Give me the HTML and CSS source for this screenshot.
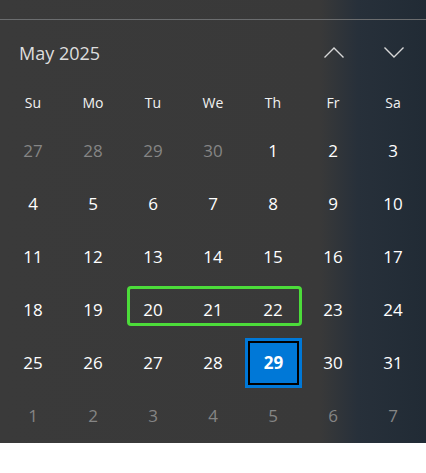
FILE: index.html
```html
<!DOCTYPE html>
<html lang="en">
<head>
  <meta charset="UTF-8">
  <meta name="viewport" content="width=device-width, initial-scale=1.0">
  <title>Calendar</title>
  <link rel="stylesheet" href="styles.css">
</head>
<body>

  <!-- Calendar flyout -->
  <div class="flyout">
    <div class="top-strip"></div>

    <!-- Month header -->
    <div class="month-head">
      <span class="month-title">May 2025</span>
      <div class="nav">
        <button class="nav-btn" aria-label="Previous month">
          <svg width="20" height="11" viewBox="0 0 20 11"><polyline points="0.5,10.5 10,1 19.5,10.5" /></svg>
        </button>
        <button class="nav-btn" aria-label="Next month">
          <svg width="20" height="11" viewBox="0 0 20 11"><polyline points="0.5,0.5 10,10 19.5,0.5" /></svg>
        </button>
      </div>
    </div>

    <!-- Weekday names -->
    <div class="weekdays">
      <span>Su</span><span>Mo</span><span>Tu</span><span>We</span><span>Th</span><span>Fr</span><span>Sa</span>
    </div>

    <!-- Days -->
    <div class="days">
      <span class="day other">27</span><span class="day other">28</span><span class="day other">29</span><span class="day other">30</span><span class="day">1</span><span class="day">2</span><span class="day">3</span>
      <span class="day">4</span><span class="day">5</span><span class="day">6</span><span class="day">7</span><span class="day">8</span><span class="day">9</span><span class="day">10</span>
      <span class="day">11</span><span class="day">12</span><span class="day">13</span><span class="day">14</span><span class="day">15</span><span class="day">16</span><span class="day">17</span>
      <span class="day">18</span><span class="day">19</span><span class="day">20</span><span class="day">21</span><span class="day">22</span><span class="day">23</span><span class="day">24</span>
      <span class="day">25</span><span class="day">26</span><span class="day">27</span><span class="day">28</span><span class="day today"><span class="today-box">29</span></span><span class="day">30</span><span class="day">31</span>
      <span class="day other">1</span><span class="day other">2</span><span class="day other">3</span><span class="day other">4</span><span class="day other">5</span><span class="day other">6</span><span class="day other">7</span>

      <!-- highlighted range 20-22 -->
      <div class="range-mark"></div>
    </div>
  </div>

</body>
</html>
```

FILE: styles.css
```css
* {
  box-sizing: border-box;
  margin: 0;
  padding: 0;
}

body {
  font-family: "Open Sans", "Noto Sans", Arial, sans-serif;
  background-color: #fff;
  color: #fff;
}

.flyout {
  width: 426px;
  height: 443px;
  background: linear-gradient(to right, #3a3a3a 0, #393939 320px, #27303a 358px, #212b35 100%);
  overflow: hidden;
}

.top-strip {
  height: 20px;
  border-bottom: 1px solid #6b6d6f;
}

/* Month header */
.month-head {
  height: 66px;
  display: flex;
  align-items: center;
  justify-content: space-between;
  padding-left: 19px;
  padding-right: 2px;
}

.month-title {
  font-size: 18px;
  color: #dedede;
  margin-top: 0px;
}

.nav {
  display: flex;
  margin-top: -1px;
}

.nav-btn {
  width: 60px;
  height: 40px;
  background: none;
  border: none;
  display: flex;
  align-items: center;
  justify-content: center;
}

.nav-btn polyline {
  fill: none;
  stroke: #d8d8d8;
  stroke-width: 1.4;
}

/* Weekday names */
.weekdays {
  height: 32px;
  margin: 0 3px;
  display: grid;
  grid-template-columns: repeat(7, 60px);
  align-items: center;
  font-size: 14px;
  color: #f2f2f2;
}

.weekdays span {
  text-align: center;
}

/* Day grid */
.days {
  position: relative;
  margin: 6px 3px 0;
  display: grid;
  grid-template-columns: repeat(7, 60px);
  grid-auto-rows: 53px;
  font-size: 17px;
}

.day {
  display: flex;
  align-items: center;
  justify-content: center;
}

.day.other {
  color: #858585;
}

.day.today {
  align-items: flex-start;
  justify-content: flex-start;
}

.today-box {
  width: 57px;
  height: 50px;
  margin: 2px 0 0 2px;
  display: flex;
  align-items: center;
  justify-content: center;
  background-color: #0078d7;
  border: 3px solid #0078d7;
  box-shadow: inset 0 0 0 2px #000;
  font-weight: bold;
  padding-bottom: 2px;
}

.range-mark {
  position: absolute;
  left: 124px;
  top: 162px;
  width: 175px;
  height: 40px;
  border: 3px solid #4cdc3a;
  border-radius: 4px;
  pointer-events: none;
}
```
